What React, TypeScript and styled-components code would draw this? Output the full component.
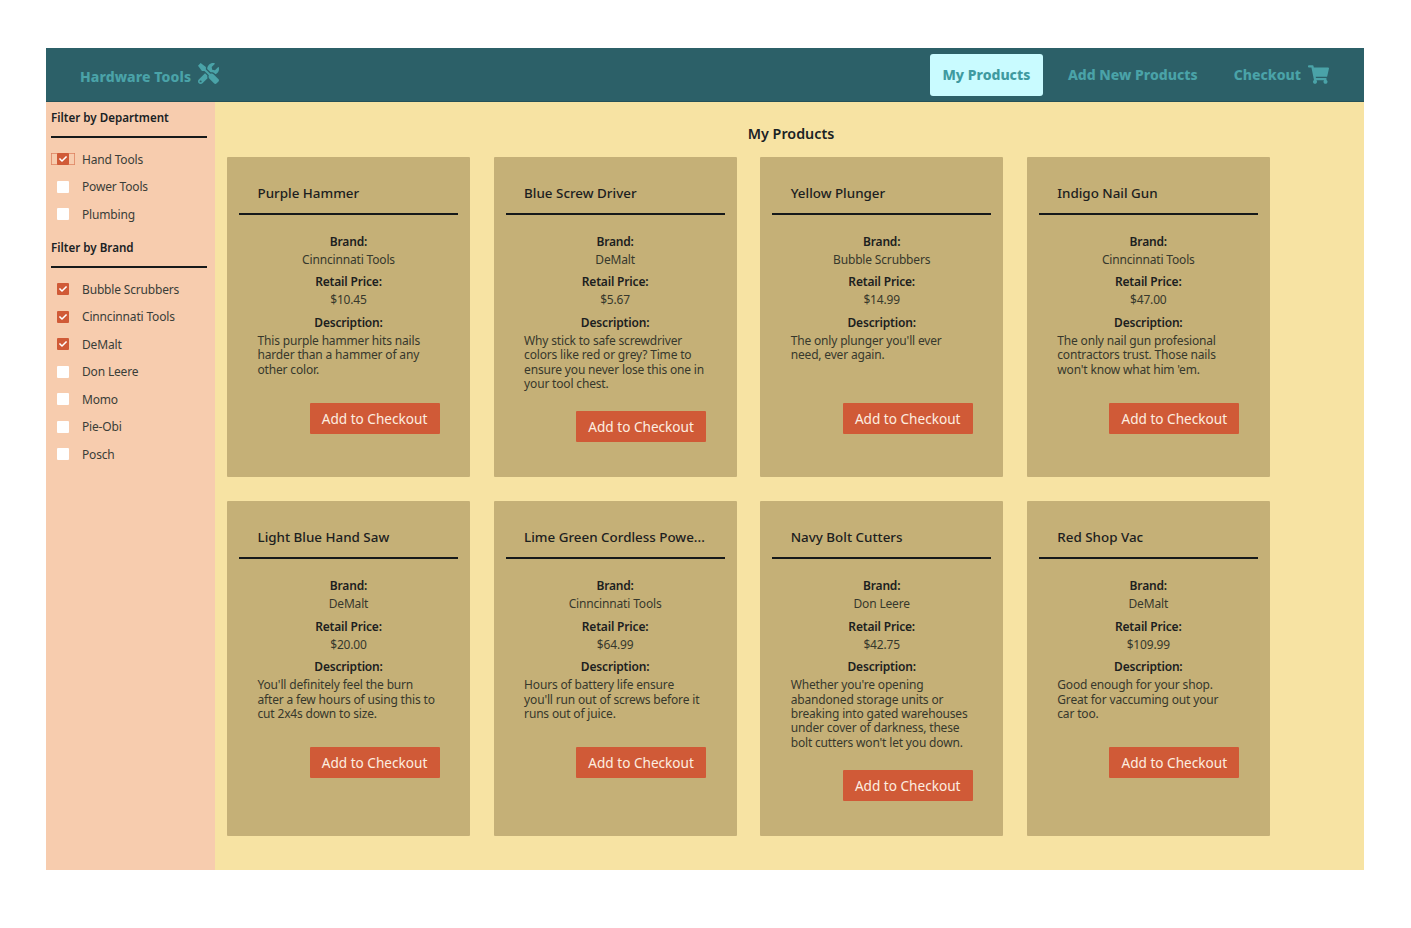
import styled, { createGlobalStyle } from "styled-components";
import { FaShoppingCart, FaTools, FaCheck } from "react-icons/fa";

const teal = "#2c6068";
const tealText = "#4aa3a8";
const orange = "#d05a37";
const sansStack = `"Noto Sans", "Open Sans", sans-serif`;

const GlobalStyle = createGlobalStyle`
  html, body {
    margin: 0;
    padding: 0;
    background: #fff;
    font-family: ${sansStack};
  }
`;

const Page = styled.div`
  padding: 48px 47px 58px 46px;
`;

const Header = styled.header`
  height: 54px;
  background: ${teal};
  display: flex;
  align-items: center;
  justify-content: space-between;
  padding: 0 35px 0 34px;
  box-shadow: inset 0 -1px 0 rgba(0, 0, 0, 0.15);
`;

const Brand = styled.div`
  display: flex;
  align-items: center;
  gap: 7px;
  padding-top: 2px;
  color: ${tealText};
  font-size: 14px;
  font-weight: 800;
  letter-spacing: 0.1px;
  svg {
    font-size: 21px;
    margin-top: -5px;
  }
`;

const Nav = styled.nav`
  display: flex;
  align-items: center;
`;

const NavLink = styled.a<{ $active?: boolean; $offset?: number }>`
  display: flex;
  align-items: center;
  gap: 7px;
  height: 42px;
  padding-bottom: 2px;
  width: ${({ $active }) => ($active ? "113px" : "auto")};
  justify-content: center;
  box-sizing: border-box;
  margin-left: ${({ $offset = 0 }) => $offset}px;
  border-radius: 3px;
  font-size: 14px;
  font-weight: 800;
  color: ${({ $active }) => ($active ? "#3f9aa0" : tealText)};
  background: ${({ $active }) => ($active ? "#c9fbff" : "transparent")};
  svg {
    font-size: 21px;
  }
`;

const Body = styled.div`
  display: flex;
  height: 768px;
`;

const Sidebar = styled.aside`
  width: 169px;
  padding: 0 8px 0 5px;
  box-sizing: border-box;
  flex: none;
  background: #f7ccae;
  color: #1f2a2c;
`;

const FilterTitle = styled.h4`
  margin: 0;
  height: 36px;
  box-sizing: border-box;
  padding-top: 7px;
  font-size: 11.6px;
  font-weight: 600;
  line-height: 18px;
  color: #1a2224;
  border-bottom: 2px solid #16191a;
  width: 156px;
`;

const FilterList = styled.ul`
  list-style: none;
  margin: 7.5px 0 4px;
  padding: 0;
`;

const FilterItem = styled.li`
  height: 27.5px;
  display: flex;
  align-items: center;
  gap: 13px;
  padding-left: 6px;
  font-size: 12px;
  letter-spacing: -0.17px;
  color: #3a3d38;
`;

const Check = styled.span<{ $checked?: boolean }>`
  width: 12px;
  height: 12px;
  flex: none;
  display: flex;
  align-items: center;
  justify-content: center;
  background: ${({ $checked }) => ($checked ? orange : "#fff")};
  color: #fff;
  border-radius: 1px;
  svg {
    font-size: 8px;
  }
`;

const WideCheck = styled(Check)`
  box-shadow: -6px 0 0 -0.5px #f7ccae, -6px 0 0 0 ${orange}, 6px 0 0 -0.5px #f7ccae, 6px 0 0 0 ${orange};
`;

const Main = styled.main`
  flex: 1;
  background: #f7e3a3;
  padding: 0 12px;
`;

const Heading = styled.h2`
  margin: 0;
  height: 55px;
  box-sizing: border-box;
  padding: 22px 0 0 3px;
  text-align: center;
  font-size: 14.3px;
  line-height: 20px;
  font-weight: 600;
  color: #1a2224;
`;

const Grid = styled.div`
  display: grid;
  grid-template-columns: repeat(4, 243px);
  column-gap: 23.6px;
  row-gap: 24.5px;
`;

const Card = styled.article`
  background: #c5b077;
  padding: 0 12px 34.5px;
  border-radius: 1px;
  color: #37382c;
`;

const CardTitle = styled.h3`
  margin: 0;
  height: 58px;
  box-sizing: border-box;
  padding: 26px 0 0 18.5px;
  font-size: 13.4px;
  line-height: 20px;
  font-weight: 500;
  color: #1c2020;
  border-bottom: 2px solid #16191a;
  white-space: nowrap;
`;

const Field = styled.div`
  text-align: center;
  font-size: 12px;
  letter-spacing: -0.17px;
  line-height: 18px;
  margin-top: 4.4px;
  &:first-of-type {
    margin-top: 18px;
  }
`;

const Label = styled.div`
  font-weight: 600;
  color: #1c2020;
`;

const Description = styled.p`
  margin: 2px 0 20px;
  min-height: 49px;
  padding: 0 20px 0 18.5px;
  font-size: 12px;
  letter-spacing: -0.17px;
  line-height: 14.4px;
  text-align: left;
`;

const AddButton = styled.button`
  display: block;
  width: 130px;
  height: 31px;
  margin: 0 18.5px 0 auto;
  border: 0;
  border-radius: 1px;
  padding: 0;
  background: ${orange};
  color: #fdeee0;
  font-family: ${sansStack};
  font-size: 13.6px;
`;

type Product = {
  name: string;
  brand: string;
  price: string;
  description: string;
};

const products: Product[] = [
  {
    name: "Purple Hammer",
    brand: "Cinncinnati Tools",
    price: "$10.45",
    description: "This purple hammer hits nails harder than a hammer of any other color.",
  },
  {
    name: "Blue Screw Driver",
    brand: "DeMalt",
    price: "$5.67",
    description:
      "Why stick to safe screwdriver colors like red or grey? Time to ensure you never lose this one in your tool chest.",
  },
  {
    name: "Yellow Plunger",
    brand: "Bubble Scrubbers",
    price: "$14.99",
    description: "The only plunger you'll ever need, ever again.",
  },
  {
    name: "Indigo Nail Gun",
    brand: "Cinncinnati Tools",
    price: "$47.00",
    description: "The only nail gun profesional contractors trust. Those nails won't know what him 'em.",
  },
  {
    name: "Light Blue Hand Saw",
    brand: "DeMalt",
    price: "$20.00",
    description: "You'll definitely feel the burn after a few hours of using this to cut 2x4s down to size.",
  },
  {
    name: "Lime Green Cordless Powe...",
    brand: "Cinncinnati Tools",
    price: "$64.99",
    description: "Hours of battery life ensure you'll run out of screws before it runs out of juice.",
  },
  {
    name: "Navy Bolt Cutters",
    brand: "Don Leere",
    price: "$42.75",
    description:
      "Whether you're opening abandoned storage units or breaking into gated warehouses under cover of darkness, these bolt cutters won't let you down.",
  },
  {
    name: "Red Shop Vac",
    brand: "DeMalt",
    price: "$109.99",
    description: "Good enough for your shop. Great for vaccuming out your car too.",
  },
];

const departments = [
  { name: "Power Tools", checked: false },
  { name: "Plumbing", checked: false },
];

const brands = [
  { name: "Bubble Scrubbers", checked: true },
  { name: "Cinncinnati Tools", checked: true },
  { name: "DeMalt", checked: true },
  { name: "Don Leere", checked: false },
  { name: "Momo", checked: false },
  { name: "Pie-Obi", checked: false },
  { name: "Posch", checked: false },
];

const App = () => {
  return (
    <Page>
      <GlobalStyle />
      <Header>
        <Brand>
          Hardware Tools <FaTools />
        </Brand>
        <Nav>
          <NavLink $active>My Products</NavLink>
          <NavLink $offset={25}>Add New Products</NavLink>
          <NavLink $offset={36}>
            Checkout <FaShoppingCart />
          </NavLink>
        </Nav>
      </Header>
      <Body>
        <Sidebar>
          <FilterTitle>Filter by Department</FilterTitle>
          <FilterList>
            <FilterItem>
              <WideCheck $checked>
                <FaCheck />
              </WideCheck>
              Hand Tools
            </FilterItem>
            {departments.map((d) => (
              <FilterItem key={d.name}>
                <Check $checked={d.checked} />
                {d.name}
              </FilterItem>
            ))}
          </FilterList>
          <FilterTitle>Filter by Brand</FilterTitle>
          <FilterList>
            {brands.map((b) => (
              <FilterItem key={b.name}>
                <Check $checked={b.checked}>{b.checked && <FaCheck />}</Check>
                {b.name}
              </FilterItem>
            ))}
          </FilterList>
        </Sidebar>
        <Main>
          <Heading>My Products</Heading>
          <Grid>
            {products.map((p) => (
              <Card key={p.name}>
                <CardTitle>{p.name}</CardTitle>
                <Field>
                  <Label>Brand:</Label>
                  {p.brand}
                </Field>
                <Field>
                  <Label>Retail Price:</Label>
                  {p.price}
                </Field>
                <Field>
                  <Label>Description:</Label>
                </Field>
                <Description>{p.description}</Description>
                <AddButton>Add to Checkout</AddButton>
              </Card>
            ))}
          </Grid>
        </Main>
      </Body>
    </Page>
  );
};

export default App;
